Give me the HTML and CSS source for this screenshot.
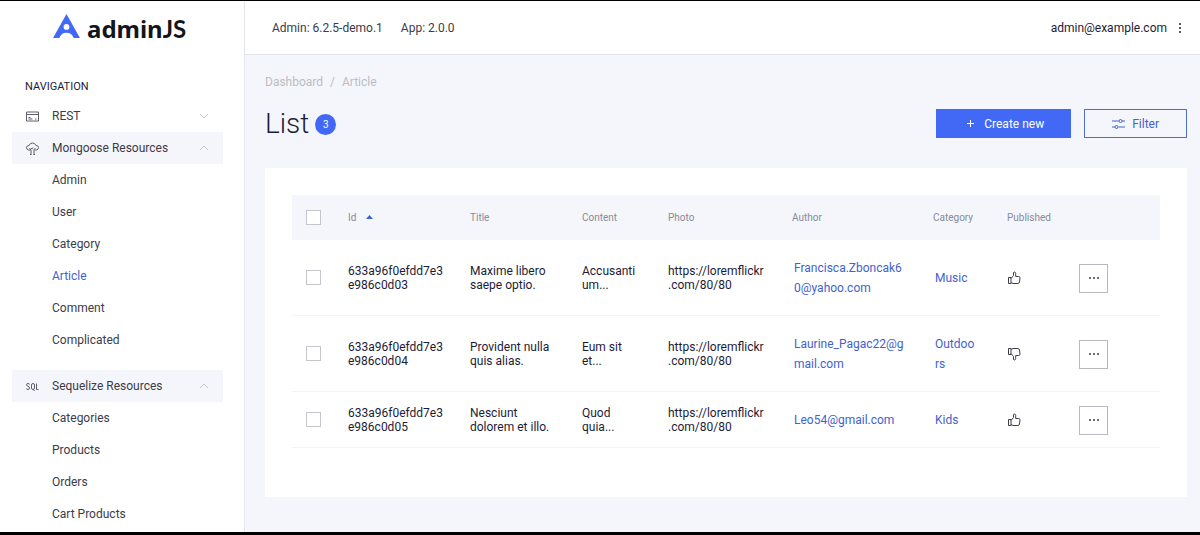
FILE: index.html
```html
<!DOCTYPE html>
<html lang="en">

<head>
    <meta charset="UTF-8">
    <meta name="viewport" content="width=device-width, initial-scale=1.0">
    <title>AdminJS</title>
    <link rel="stylesheet" href="styles.css">
</head>

<body>
    <!-- Shared icons -->
    <svg class="sprite" aria-hidden="true">
        <symbol id="chevron-down" viewBox="0 0 10 10">
            <path d="M1 3l4 4 4-4" />
        </symbol>
        <symbol id="chevron-up" viewBox="0 0 10 10">
            <path d="M1 7l4-4 4 4" />
        </symbol>
        <symbol id="thumbs-up" viewBox="0 0 14 14">
            <path d="M1.500 6.500h2.500v6H1.500zM4 7.500l2.500-3V2q0-1 1-1t1.200 1.500V5.500h2.800q1.500 0 1.500 1.300l-.5 4.200q-.3 1.500-1.600 1.500H6L4 11.500" />
        </symbol>
        <symbol id="thumbs-down" viewBox="0 0 14 14">
            <path d="M1.500 7.500h2.500v-6H1.500zM4 6.500l2.500 3V12q0 1 1 1t1.200-1.500V8.500h2.800q1.500 0 1.500-1.300l-.5-4.200q-.3-1.500-1.600-1.500H6L4 2.500" />
        </symbol>
    </svg>

    <div class="app">
        <!-- Sidebar -->
        <aside class="sidebar">
            <a class="logo" href="#">
                <svg class="logo-mark" width="27" height="24" viewBox="0 0 28 25" aria-hidden="true">
                    <path fill="#4268f6" fill-rule="evenodd" d="M14 0L28 25H21.500Q19.500 19.500 14 19.500T6.500 25H0zM14 10.500a3 3 0 1 0 0 6a3 3 0 1 0 0-6z" />
                </svg>
                <span>admin<span class="logo-js">JS</span></span>
            </a>
            <nav class="nav">
                <h2 class="nav-title">NAVIGATION</h2>
                <div class="nav-group">
                    <button class="nav-head" type="button">
                        <svg class="icon" width="13" height="13" viewBox="0 0 13 13" aria-hidden="true">
                            <path d="M.5 2h12v9H.5zM.5 4.500h12M2.500 7.500h2M2.500 9h4M9 9h1.500" />
                        </svg>
                        <span>REST</span>
                        <svg class="chevron" width="10" height="10" aria-hidden="true"><use href="#chevron-down" /></svg>
                    </button>
                </div>
                <div class="nav-group">
                    <button class="nav-head open" type="button">
                        <svg class="icon" width="13" height="13" viewBox="0 0 13 13" aria-hidden="true">
                            <path d="M4.500 8H2.500Q.5 7.500.5 5.500T3 3.500Q4 1 6.500 1T10 3.500Q12.500 3.500 12.500 5.500T10.500 8H8.500M5 12.500V8L3.500 6M8 12.500V7.500L9.500 6M4 12.500h1.500M7.500 12.500H9M5 6.500Q6.500 7.500 7 5.500" />
                        </svg>
                        <span>Mongoose Resources</span>
                        <svg class="chevron" width="10" height="10" aria-hidden="true"><use href="#chevron-up" /></svg>
                    </button>
                    <a class="nav-link" href="#">Admin</a>
                    <a class="nav-link" href="#">User</a>
                    <a class="nav-link" href="#">Category</a>
                    <a class="nav-link active" href="#">Article</a>
                    <a class="nav-link" href="#">Comment</a>
                    <a class="nav-link" href="#">Complicated</a>
                </div>
                <div class="nav-group spaced">
                    <button class="nav-head open" type="button">
                        <svg class="icon" width="13" height="13" viewBox="0 0 13 13" aria-hidden="true">
                            <path d="M3.500 4.500Q3.500 3.500 2 3.500T.5 4.800Q.5 6 2 6.300T3.500 8Q3.500 9.500 2 9.500T.5 8.500M5.500 5Q5.500 3.500 7 3.500T8.500 5V8Q8.500 9.500 7 9.500T5.500 8zM7.500 9.500l1 1.500M10.500 3.500v6h2" />
                        </svg>
                        <span>Sequelize Resources</span>
                        <svg class="chevron" width="10" height="10" aria-hidden="true"><use href="#chevron-up" /></svg>
                    </button>
                    <a class="nav-link" href="#">Categories</a>
                    <a class="nav-link" href="#">Products</a>
                    <a class="nav-link" href="#">Orders</a>
                    <a class="nav-link" href="#">Cart Products</a>
                </div>
            </nav>
        </aside>

        <div class="page">
            <!-- Top bar -->
            <header class="topbar">
                <span>Admin: 6.2.5-demo.1</span>
                <span>App: 2.0.0</span>
                <button class="user" type="button">
                    admin@example.com
                    <svg width="4" height="12" viewBox="0 0 4 12" fill="currentColor" aria-hidden="true">
                        <circle cx="2" cy="2" r="1" />
                        <circle cx="2" cy="6" r="1" />
                        <circle cx="2" cy="10" r="1" />
                    </svg>
                </button>
            </header>

            <main class="content">
                <div class="breadcrumbs">
                    <a href="#">Dashboard</a>
                    <span>/</span>
                    <a href="#">Article</a>
                </div>
                <div class="heading">
                    <h1>List</h1>
                    <span class="badge">3</span>
                    <div class="actions">
                        <button class="btn primary" type="button">
                            <svg width="9" height="9" viewBox="0 0 9 9" aria-hidden="true">
                                <path d="M4.500 1v7M1 4.500h7" />
                            </svg>
                            Create new
                        </button>
                        <button class="btn" type="button">
                            <svg width="13" height="12" viewBox="0 0 13 12" aria-hidden="true">
                                <path d="M0 3h6.500M10 3h3M0 9h3M6.500 9H13" />
                                <circle cx="8.500" cy="3" r="1.500" />
                                <circle cx="4.500" cy="9" r="1.500" />
                            </svg>
                            Filter
                        </button>
                    </div>
                </div>

                <section class="card">
                    <table class="records">
                        <colgroup>
                            <col class="col-check">
                            <col class="col-id">
                            <col class="col-title">
                            <col class="col-content">
                            <col class="col-photo">
                            <col class="col-author">
                            <col class="col-category">
                            <col class="col-published">
                            <col class="col-actions">
                        </colgroup>
                        <thead>
                            <tr>
                                <th class="check"><input type="checkbox" aria-label="Select all"></th>
                                <th><a class="sort" href="#">Id <svg width="7" height="4" viewBox="0 0 7 4" aria-hidden="true"><path d="M3.500 0L7 4H0z" /></svg></a></th>
                                <th>Title</th>
                                <th>Content</th>
                                <th>Photo</th>
                                <th>Author</th>
                                <th>Category</th>
                                <th>Published</th>
                                <th></th>
                            </tr>
                        </thead>
                        <tbody>
                            <tr>
                                <td class="check"><input type="checkbox" aria-label="Select 633a96f0efdd7e3e986c0d03"></td>
                                <td class="long">633a96f0efdd7e3e986c0d03</td>
                                <td>Maxime libero saepe optio.</td>
                                <td>Accusantium...</td>
                                <td class="long">https://loremflickr.com/80/80</td>
                                <td class="long"><a class="ref" href="#">Francisca.Zboncak60@yahoo.com</a></td>
                                <td><a class="ref" href="#">Music</a></td>
                                <td><svg class="thumb" width="14" height="14" role="img" aria-label="Yes"><use href="#thumbs-up" /></svg></td>
                                <td><button class="more" type="button" aria-label="Actions"><i></i><i></i><i></i></button></td>
                            </tr>
                            <tr>
                                <td class="check"><input type="checkbox" aria-label="Select 633a96f0efdd7e3e986c0d04"></td>
                                <td class="long">633a96f0efdd7e3e986c0d04</td>
                                <td>Provident nulla quis alias.</td>
                                <td>Eum sit et...</td>
                                <td class="long">https://loremflickr.com/80/80</td>
                                <td class="long"><a class="ref" href="#">Laurine_Pagac22@gmail.com</a></td>
                                <td><a class="ref" href="#">Outdoors</a></td>
                                <td><svg class="thumb" width="14" height="14" role="img" aria-label="No"><use href="#thumbs-down" /></svg></td>
                                <td><button class="more" type="button" aria-label="Actions"><i></i><i></i><i></i></button></td>
                            </tr>
                            <tr>
                                <td class="check"><input type="checkbox" aria-label="Select 633a96f0efdd7e3e986c0d05"></td>
                                <td class="long">633a96f0efdd7e3e986c0d05</td>
                                <td>Nesciunt dolorem et illo.</td>
                                <td>Quod quia...</td>
                                <td class="long">https://loremflickr.com/80/80</td>
                                <td class="long"><a class="ref" href="#">Leo54@gmail.com</a></td>
                                <td><a class="ref" href="#">Kids</a></td>
                                <td><svg class="thumb" width="14" height="14" role="img" aria-label="Yes"><use href="#thumbs-up" /></svg></td>
                                <td><button class="more" type="button" aria-label="Actions"><i></i><i></i><i></i></button></td>
                            </tr>
                        </tbody>
                    </table>
                </section>
            </main>
        </div>
    </div>
</body>

</html>
```
FILE: styles.css
```css
* {
    box-sizing: border-box;
}

body {
    font-family: Roboto, "Liberation Sans", sans-serif;
    font-size: 12px;
    line-height: 14px;
    color: #1c1c38;
    background-color: #f5f6fb;
    margin: 0;
    min-height: 100vh;
    border-top: 1px solid #000;
    border-bottom: 3px solid #000;
    display: flex;
}

a {
    color: inherit;
    text-decoration: none;
}

button {
    font: inherit;
    color: inherit;
    cursor: pointer;
}

.sprite {
    display: none;
}

.app {
    display: flex;
    flex: 1;
}

/* Sidebar */
.sidebar {
    width: 245px;
    flex-shrink: 0;
    background-color: #fff;
    border-right: 1px solid #e4e5ec;
    padding: 12px 21px 0 12px;
}

.logo {
    display: flex;
    align-items: center;
    gap: 7px;
    height: 32px;
    padding-left: 41px;
    font-family: "Noto Sans", sans-serif;
    font-size: 24px;
    font-weight: 700;
    color: #12151c;
}

.logo-js {
    font-family: Lato, sans-serif;
}

.logo-mark {
    margin-bottom: 6px;
}

.nav-title {
    margin: 35px 0 6px;
    padding-left: 13px;
    font-size: 11px;
    font-weight: 400;
}

.nav-head {
    display: flex;
    align-items: center;
    gap: 13px;
    width: 100%;
    height: 32px;
    padding: 0 14px 0 14px;
    border: none;
    background: none;
    color: #3b3c48;
    text-align: left;
}

.nav-head.open {
    background-color: #f5f6fb;
}

.icon,
.chevron {
    fill: none;
    stroke: #5c5e6c;
}

.chevron {
    margin-left: auto;
    stroke: #c3c5cf;
}

.nav-link {
    display: block;
    padding: 9px 0 9px 40px;
    color: #3b3c48;
}

.nav-link.active {
    color: #3f62d0;
}

.spaced {
    margin-top: 14px;
}

/* Top bar */
.page {
    flex: 1;
    min-width: 0;
}

.topbar {
    display: flex;
    align-items: center;
    gap: 18px;
    height: 54px;
    padding: 0 18px 0 27px;
    background-color: #fff;
    border-bottom: 1px solid #e4e5ec;
    color: #3b3c48;
}

.user {
    display: flex;
    align-items: center;
    gap: 11px;
    margin-left: auto;
    padding: 0;
    border: none;
    background: none;
    color: #1c1c38;
}

/* List header */
.content {
    padding: 20px 13px 0 20px;
}

.breadcrumbs {
    display: flex;
    gap: 7px;
    color: #bbbcc3;
}

.heading {
    display: flex;
    align-items: center;
    gap: 6px;
    margin: 20px 0 30px;
}

h1 {
    margin: 0;
    font-size: 28px;
    font-weight: 300;
    line-height: 29px;
}

.badge {
    width: 21px;
    margin-top: 2px;
    border-radius: 50%;
    background-color: #4268f6;
    color: #fff;
    font-size: 10px;
    line-height: 21px;
    text-align: center;
}

.actions {
    display: flex;
    gap: 13px;
    margin-left: auto;
}

.btn {
    display: flex;
    align-items: center;
    gap: 7px;
    height: 29px;
    padding: 0 27px;
    border: 1px solid #4d6fca;
    background: none;
    color: #3f62d0;
}

.btn svg {
    fill: none;
    stroke: currentColor;
}

.btn.primary {
    gap: 9px;
    padding: 0 26px 0 29px;
    border-color: #4268f6;
    background-color: #4268f6;
    color: #fff;
}

/* Records table */
.card {
    padding: 27px 27px 49px;
    background-color: #fff;
}

.records {
    width: 100%;
    table-layout: fixed;
    border-spacing: 0;
}

.col-check {
    width: 40px;
}

.col-id {
    width: 122px;
}

.col-title {
    width: 112px;
}

.col-content {
    width: 86px;
}

.col-photo {
    width: 124px;
}

.col-author {
    width: 141px;
}

.col-category {
    width: 74px;
}

.col-published {
    width: 72px;
}

th {
    height: 45px;
    padding: 0 0 0 16px;
    background-color: #f5f6fb;
    color: #898a9a;
    font-size: 10px;
    font-weight: 400;
    text-align: left;
}

td {
    padding: 8px 12px 7px 16px;
    border-bottom: 1px solid #f3f3f7;
    overflow-wrap: anywhere;
}

.check {
    padding: 0 0 0 14px;
}

.check input {
    appearance: none;
    display: block;
    width: 15px;
    height: 15px;
    margin: 0;
    border: 1px solid #c5c6cb;
    background-color: #fff;
}

.sort svg {
    margin: 0 0 2px 7px;
    fill: #3f62d0;
}

/* Ids, urls and emails may break at any character */
.long {
    padding-right: 10px;
    line-break: anywhere;
}

.ref {
    display: block;
    padding: 10px 2px;
    color: #3f62d0;
    line-height: 20px;
}

.thumb {
    display: block;
    fill: none;
    stroke: #3b3c48;
}

.more {
    display: flex;
    align-items: center;
    justify-content: center;
    gap: 2px;
    width: 29px;
    height: 29px;
    padding: 0;
    border: 1px solid #b9bac1;
    background: none;
}

.more i {
    width: 2px;
    height: 2px;
    border-radius: 50%;
    background-color: #3b3c48;
}
```
